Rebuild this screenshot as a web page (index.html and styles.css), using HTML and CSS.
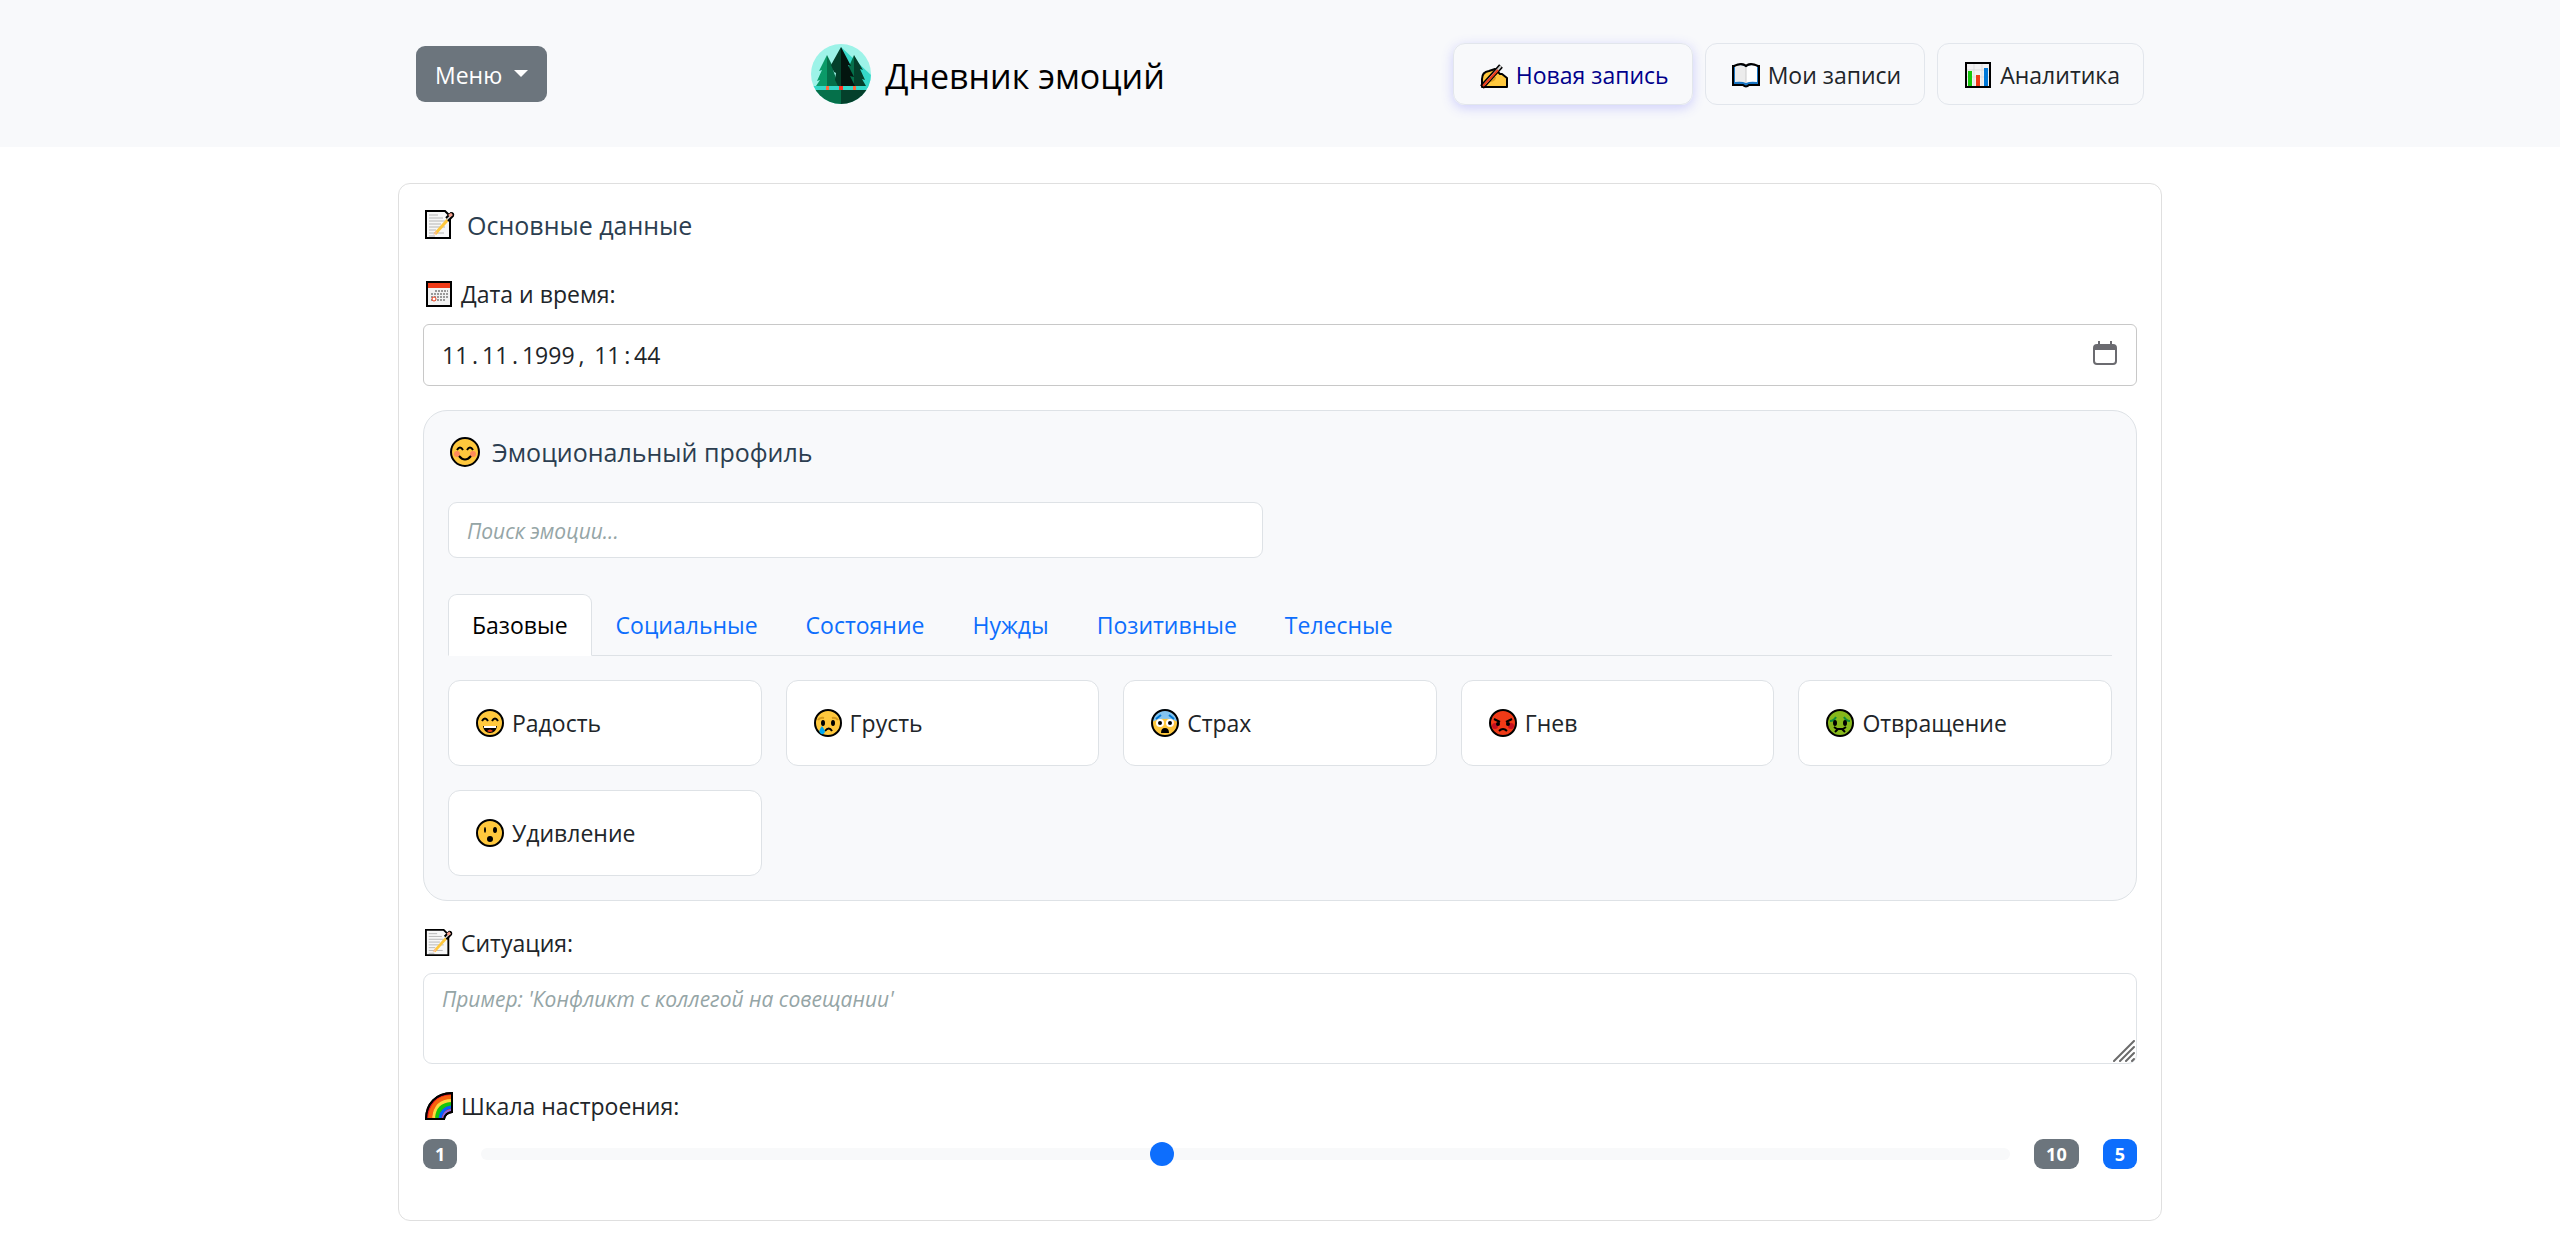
FILE: index.html
```html
<!DOCTYPE html>
<html lang="ru">
<head>
    <meta charset="UTF-8">
    <meta name="viewport" content="width=device-width, initial-scale=1.0">
    <title>Дневник эмоций</title>
    <link rel="stylesheet" href="styles.css">
</head>
<body>
    <!-- Набор иконок -->
    <svg class="sprite" aria-hidden="true">
        <symbol id="i-memo" viewBox="0 0 30 30">
            <path d="M1 1h19l5 5v22H1z" fill="#f7f7f7" stroke="#000" stroke-width="2"/>
            <path d="M4 5h9M4 8h14M4 11h16M4 14h12M4 17h16M4 20h7M4 23h15M4 26h6" stroke="#b5b5b5" stroke-width="1"/>
            <path d="M27 5L10 24" stroke="#ffc83d" stroke-width="3"/>
            <path d="M21 8l5-5q3 0 2 3l-5 5" fill="#ccc" stroke="#000" stroke-width="2"/>
            <path d="M24 6l3-2" stroke="#f5a08c" stroke-width="3"/>
            <path d="M11 21l-3 4 4-2z" fill="#f7b6a0"/>
        </symbol>
        <symbol id="i-calendar" viewBox="0 0 28 28">
            <path d="M2 2h24v24H2z" fill="#f2f2f2" stroke="#000" stroke-width="2"/>
            <path d="M3 3h22v5H3z" fill="#f03a17"/>
            <path d="M10 11h13M6 14h17M6 17h17M6 20h15" stroke="#999" stroke-width="2" stroke-dasharray="2 1"/>
            <circle cx="9" cy="19" r="2" fill="#fff" stroke="#f03a17"/>
        </symbol>
        <symbol id="i-write" viewBox="0 0 28 28">
            <path d="M2 26V18Q2 11 9 10l6-2 5 5h2l5 4v9z" fill="#ffc83d" stroke="#000" stroke-width="2" stroke-linejoin="round"/>
            <path d="M9 20q6 0 6-4" fill="none" stroke="#e0a020" stroke-width="2"/>
            <path d="M2 26L21 5" stroke="#000" stroke-width="5"/>
            <path d="M4 24L21 5" stroke="#ccc" stroke-width="2"/>
            <path d="M3 25L18 9" stroke="#f03a17" stroke-width="2"/>
        </symbol>
        <symbol id="i-book" viewBox="0 0 28 28">
            <path d="M1 5h3q6-3 10 0q4-3 10 0h3v19H17q-3 3-6 0H1z" fill="#1976c5" stroke="#000" stroke-width="2"/>
            <path d="M3 5q7-2 11 1v16q-4-2-11-1z" fill="#ececec"/>
            <path d="M25 5q-7-2-11 1v16q4-2 11-1z" fill="#fff"/>
            <path d="M2 5q8-4 12 0q4-4 12 0" fill="none" stroke="#000" stroke-width="2"/>
            <path d="M14 6v16" stroke="#ccc"/>
        </symbol>
        <symbol id="i-chart" viewBox="0 0 28 28">
            <path d="M2 2h24v24H2z" fill="#f2f2f2" stroke="#000" stroke-width="2"/>
            <path d="M3 9h22M3 16h22M10 3v22M18 3v22" stroke="#ddd"/>
            <path d="M4 10h4v15H4z" fill="#16c60c"/>
            <path d="M12 14h4v11h-4z" fill="#f03a17"/>
            <path d="M20 7h4v18h-4z" fill="#0078d7"/>
        </symbol>
        <symbol id="i-rainbow" viewBox="0 0 28 28">
            <path d="M1 27C1 12 11 1 27 1v19q-7 1-8 7z" fill="#e81224" stroke="#000" stroke-width="2"/>
            <path d="M5 26C6 14 13 5 26 5" fill="none" stroke="#f7630c" stroke-width="4"/>
            <path d="M9 26Q11 9 26 9" fill="none" stroke="#ffd83d" stroke-width="4"/>
            <path d="M12 26Q13 13 26 12" fill="none" stroke="#16c60c" stroke-width="4"/>
            <path d="M15 26Q17 16 26 15" fill="none" stroke="#0063ff" stroke-width="3"/>
            <path d="M18 26Q19 19 26 18" fill="none" stroke="#886ce4" stroke-width="2"/>
            <path d="M1 27C1 12 11 1 27 1v19q-7 1-8 7z" fill="none" stroke="#000" stroke-width="2"/>
        </symbol>
        <symbol id="i-smile" viewBox="0 0 30 30">
            <circle cx="15" cy="15" r="14" fill="#ffc83d" stroke="#000" stroke-width="2"/>
            <circle cx="7" cy="17" r="3" fill="#ff8b5a"/>
            <circle cx="23" cy="17" r="3" fill="#ff8b5a"/>
            <path d="M7 13q3-5 6 0M17 13q3-5 6 0M9 19q6 7 12 0" fill="none" stroke="#000" stroke-width="2"/>
        </symbol>
        <symbol id="i-joy" viewBox="0 0 28 28">
            <circle cx="14" cy="14" r="13" fill="#ffc83d" stroke="#000" stroke-width="2"/>
            <path d="M6 12q3-5 6 0M16 12q3-5 6 0" fill="none" stroke="#000" stroke-width="2"/>
            <path d="M7 17h14q-1 7-7 7t-7-7z" fill="#000"/>
            <path d="M8 17h12v2H8z" fill="#fff"/>
            <path d="M11 22q3-3 6 0q-3 2-6 0z" fill="#f03a17"/>
        </symbol>
        <symbol id="i-sad" viewBox="0 0 28 28">
            <circle cx="14" cy="14" r="13" fill="#ffc83d" stroke="#000" stroke-width="2"/>
            <path d="M4 11q2-3 6-2M18 9q4-1 6 2" fill="none" stroke="#d69a1c" stroke-width="2"/>
            <ellipse cx="9" cy="14" rx="2" ry="3" fill="#000"/>
            <ellipse cx="19" cy="14" rx="2" ry="3" fill="#000"/>
            <path d="M11 22q4-5 7 0" fill="none" stroke="#000" stroke-width="2"/>
            <path d="M8 17q-4 5-2 7q3 3 5-1q0-2-3-6z" fill="#00a8f0"/>
        </symbol>
        <symbol id="i-fear" viewBox="0 0 28 28">
            <circle cx="14" cy="14" r="13" fill="#ffc83d"/>
            <path d="M1 13a13 13 0 0 1 26 0q-7-4-13-3q-6-1-13 3z" fill="#83c4f0"/>
            <path d="M5 10l5-4M18 6l5 4" stroke="#0078d7" stroke-width="2"/>
            <circle cx="9" cy="14" r="4" fill="#fff"/>
            <circle cx="19" cy="14" r="4" fill="#fff"/>
            <circle cx="9" cy="14" r="2"/>
            <circle cx="19" cy="14" r="2"/>
            <path d="M10 24q0-5 4-5t4 5z"/>
            <circle cx="14" cy="14" r="13" fill="none" stroke="#000" stroke-width="2"/>
        </symbol>
        <symbol id="i-anger" viewBox="0 0 28 28">
            <circle cx="14" cy="14" r="13" fill="#f03a17" stroke="#000" stroke-width="2"/>
            <circle cx="6" cy="17" r="3" fill="#c50f1f"/>
            <circle cx="22" cy="17" r="3" fill="#c50f1f"/>
            <path d="M5 10l6 3M23 10l-6 3M10 22q4-4 8 0" fill="none" stroke="#000" stroke-width="2"/>
            <circle cx="9" cy="15" r="2"/>
            <circle cx="19" cy="15" r="2"/>
        </symbol>
        <symbol id="i-disgust" viewBox="0 0 28 28">
            <circle cx="14" cy="14" r="13" fill="#86b81b" stroke="#000" stroke-width="2"/>
            <path d="M4 12q4 0 6-4M24 12q-4 0-6-4" fill="none" stroke="#0e8a3a" stroke-width="2"/>
            <ellipse cx="9" cy="14" rx="2" ry="3"/>
            <ellipse cx="19" cy="14" rx="2" ry="3"/>
            <path d="M8 18l3 2h6l3-2M9 23l3-3M19 23l-3-3" fill="none" stroke="#000" stroke-width="2"/>
        </symbol>
        <symbol id="i-surprise" viewBox="0 0 28 28">
            <circle cx="14" cy="14" r="13" fill="#ffc83d" stroke="#000" stroke-width="2"/>
            <ellipse cx="9" cy="11" rx="1" ry="3"/>
            <ellipse cx="19" cy="11" rx="2" ry="3"/>
            <ellipse cx="14" cy="20" rx="3" ry="3"/>
        </symbol>
    </svg>

    <header class="header">
        <div class="header-inner">
            <button type="button" class="menu-button">Меню</button>

            <div class="brand">
                <svg class="brand-logo" viewBox="0 0 60 60" aria-hidden="true">
                    <clipPath id="round"><circle cx="30" cy="30" r="30"/></clipPath>
                    <g clip-path="url(#round)">
                        <path d="M0 0h60v60H0z" fill="#9df3e8"/>
                        <path d="M30 3l30 28v13H30z" fill="#35d8c8"/>
                        <path d="M16 11L8 27l3-1-5 11 3-1-4 6h11z" fill="#0a9a68"/>
                        <path d="M16 11l8 16-2-1 6 16H16z" fill="#05704a"/>
                        <path d="M43 11l-7 16v15h8z" fill="#05704a"/>
                        <path d="M43 11l9 15-3-1 5 11-3-1 4 7H43z" fill="#04402b"/>
                        <path d="M30 3L20 21l3 7 2 1-1 7 3 6h3z" fill="#04402b"/>
                        <path d="M30 3l10 19-3-1 6 12-4-1 5 10H30z" fill="#03150f"/>
                        <path d="M0 42h60v4H0z" fill="#35d8c8"/>
                        <path d="M15 42h3v4h-3zM42 42h3v4h-3z" fill="#ff6b3d"/>
                        <path d="M28 42h4v4h-4z" fill="#ff3020"/>
                        <path d="M0 46h30v14H0z" fill="#05704a"/>
                        <path d="M30 46h30v14H30z" fill="#04402b"/>
                    </g>
                </svg>
                <span class="brand-name">Дневник эмоций</span>
            </div>

            <nav class="nav">
                <a href="#new" class="nav-item active"><svg class="icon"><use href="#i-write"/></svg>Новая запись</a>
                <a href="#entries" class="nav-item"><svg class="icon"><use href="#i-book"/></svg>Мои записи</a>
                <a href="#stats" class="nav-item"><svg class="icon"><use href="#i-chart"/></svg>Аналитика</a>
            </nav>
        </div>
    </header>

    <main class="container">
        <form class="card">
            <h2 class="section-title"><svg class="icon-lg"><use href="#i-memo"/></svg>Основные данные</h2>

            <!-- Дата и время -->
            <div class="field">
                <label for="date"><svg class="icon"><use href="#i-calendar"/></svg>Дата и время:</label>
                <div class="date-box">
                    <input type="text" id="date" name="date" class="control control-date" value="11&thinsp;.&thinsp;11&thinsp;.&thinsp;1999&thinsp;,&thinsp; 11&thinsp;:&thinsp;44">
                    <button type="button" class="date-button" aria-label="Открыть календарь">
                        <svg viewBox="0 0 24 24" width="24" height="24">
                            <path d="M5 0h2v4H5zM17 0h2v4h-2z" fill="#6b6b70"/>
                            <rect x="1" y="4" width="22" height="19" rx="3" fill="none" stroke="#6b6b70" stroke-width="2"/>
                            <path d="M1 4h22v5H1z" fill="#6b6b70"/>
                        </svg>
                    </button>
                </div>
            </div>

            <!-- Эмоции -->
            <section class="profile">
                <h2 class="section-title"><svg class="icon-lg"><use href="#i-smile"/></svg>Эмоциональный профиль</h2>
                <input type="text" class="control search" placeholder="Поиск эмоции..." aria-label="Поиск эмоции">

                <div class="tabs" role="tablist">
                    <button type="button" class="tab active" role="tab">Базовые</button>
                    <button type="button" class="tab" role="tab">Социальные</button>
                    <button type="button" class="tab" role="tab">Состояние</button>
                    <button type="button" class="tab" role="tab">Нужды</button>
                    <button type="button" class="tab" role="tab">Позитивные</button>
                    <button type="button" class="tab" role="tab">Телесные</button>
                </div>

                <div class="emotions">
                    <button type="button" class="emotion"><svg class="icon"><use href="#i-joy"/></svg>Радость</button>
                    <button type="button" class="emotion"><svg class="icon"><use href="#i-sad"/></svg>Грусть</button>
                    <button type="button" class="emotion"><svg class="icon"><use href="#i-fear"/></svg>Страх</button>
                    <button type="button" class="emotion"><svg class="icon"><use href="#i-anger"/></svg>Гнев</button>
                    <button type="button" class="emotion"><svg class="icon"><use href="#i-disgust"/></svg>Отвращение</button>
                    <button type="button" class="emotion"><svg class="icon"><use href="#i-surprise"/></svg>Удивление</button>
                </div>
            </section>

            <!-- Ситуация -->
            <div class="field">
                <label for="situation"><svg class="icon"><use href="#i-memo"/></svg>Ситуация:</label>
                <div class="textarea-box">
                    <textarea id="situation" name="situation" class="control" placeholder="Пример: 'Конфликт с коллегой на совещании'"></textarea>
                    <svg class="grip" viewBox="0 0 22 22" aria-hidden="true">
                        <path d="M1 21L21 1M7 21L21 7M13 21l8-8M19 21l2-2" stroke="#6b6b6b" stroke-width="2" stroke-linecap="round"/>
                    </svg>
                </div>
            </div>

            <!-- Настроение -->
            <div class="field">
                <label for="mood"><svg class="icon"><use href="#i-rainbow"/></svg>Шкала настроения:</label>
                <div class="scale">
                    <span class="badge">1</span>
                    <input type="range" id="mood" name="mood" min="1" max="10" value="5">
                    <span class="badge">10</span>
                    <span class="badge badge-primary">5</span>
                </div>
            </div>
        </form>
    </main>
</body>
</html>
```
FILE: styles.css
```css
* {
    box-sizing: border-box;
    margin: 0;
    padding: 0;
}
body {
    background-color: #fff;
    color: #212529;
    font-family: 'Open Sans', 'Noto Sans', sans-serif;
    font-size: 23px;
    line-height: 36px;
}
button,
input,
textarea {
    font: inherit;
    color: inherit;
}
button {
    cursor: pointer;
}
.sprite {
    display: none;
}
.icon {
    flex: none;
    width: 28px;
    height: 28px;
}
.icon-lg {
    flex: none;
    width: 30px;
    height: 30px;
}

/* Шапка */
.header {
    background-color: #f8f9fb;
    padding: 43px 18px 42px;
}
.header-inner {
    display: flex;
    justify-content: space-between;
    align-items: center;
    max-width: 1764px;
    margin: 0 auto;
    padding: 0 18px;
}
.menu-button {
    display: flex;
    align-items: center;
    gap: 12px;
    height: 56px;
    padding: 2px 19px 0;
    border: none;
    border-radius: 9px;
    background-color: #6c757d;
    color: #fff;
}
.menu-button::after {
    content: "";
    border-top: 7px solid #fff;
    border-left: 7px solid transparent;
    border-right: 7px solid transparent;
    margin-bottom: 4px;
}
.brand {
    display: flex;
    align-items: center;
    gap: 14px;
    margin-right: 24px;
}
.brand-logo {
    width: 60px;
    height: 60px;
}
.brand-name {
    padding-top: 3px;
    color: #000;
    font-size: 34px;
}
.nav {
    display: flex;
    gap: 12px;
}
.nav-item {
    display: flex;
    align-items: center;
    gap: 8px;
    padding: 13px 23px 11px 26px;
    border: 1px solid #e2e6ec;
    border-radius: 12px;
    color: #212529;
    text-decoration: none;
}
.nav-item.active {
    color: #00008b;
    box-shadow: 0 3px 12px rgba(80, 80, 255, 0.25);
}

/* Форма */
.container {
    max-width: 1800px;
    margin: 36px auto 0;
    padding: 0 18px;
}
.card {
    padding: 24px;
    border: 1px solid #dfdfdf;
    border-radius: 12px;
}
.section-title {
    display: flex;
    align-items: center;
    gap: 12px;
    margin-bottom: 34px;
    padding-left: 2px;
    color: #2c3e50;
    font-size: 25px;
    font-weight: 400;
    line-height: 34px;
}
.field {
    margin-bottom: 24px;
}
.field label {
    display: flex;
    align-items: center;
    gap: 8px;
    margin-bottom: 12px;
    padding-left: 2px;
}
.control {
    display: block;
    width: 100%;
    padding: 9px 18px;
    border: 1px solid #dee2e6;
    border-radius: 9px;
    background-color: #fff;
    outline: none;
}
.control::placeholder {
    color: #95a5a6;
    font-size: 21px;
    font-style: italic;
}
.date-box,
.textarea-box {
    position: relative;
}
.control-date {
    height: 62px;
    border-color: #c8c8c8;
    border-radius: 6px;
}
.date-button {
    position: absolute;
    top: 17px;
    right: 20px;
    width: 24px;
    height: 24px;
    border: none;
    background: none;
}
.date-button svg {
    display: block;
}
textarea.control {
    height: 91px;
    padding-top: 7px;
    resize: none;
}
.grip {
    position: absolute;
    right: 2px;
    bottom: 2px;
    width: 22px;
    height: 22px;
}

/* Эмоциональный профиль */
.profile {
    margin-bottom: 24px;
    padding: 24px;
    border: 1px solid #dee2e6;
    border-radius: 24px;
    background-color: #f8f9fb;
}
.profile .section-title {
    margin-bottom: 33px;
}
.search {
    width: 49%;
    height: 56px;
    margin-bottom: 36px;
}
.tabs {
    display: flex;
    margin-bottom: 24px;
    box-shadow: inset 0 -1px #dee2e6;
}
.tab {
    padding: 12px 23px;
    border: 1px solid transparent;
    border-radius: 9px 9px 0 0;
    background: none;
    color: #0d6efd;
}
.tab.active {
    border-color: #dee2e6;
    border-bottom-color: #fff;
    background-color: #fff;
    color: #000;
}
.emotions {
    display: grid;
    grid-template-columns: repeat(5, 1fr);
    gap: 24px;
}
.emotion {
    display: flex;
    align-items: center;
    gap: 8px;
    padding: 24px 27px;
    border: 1px solid #dee2e6;
    border-radius: 12px;
    background-color: #fff;
}

/* Шкала */
.scale {
    display: flex;
    align-items: center;
    gap: 24px;
}
.scale input {
    flex: 1;
    height: 36px;
    background: none;
    appearance: none;
}
.scale input::-webkit-slider-runnable-track {
    height: 12px;
    border-radius: 6px;
    background-color: #f8f9fa;
}
.scale input::-webkit-slider-thumb {
    width: 24px;
    height: 24px;
    margin-top: -6px;
    border-radius: 50%;
    background-color: #0d6efd;
    appearance: none;
}
.badge {
    padding: 6px 12px;
    border-radius: 9px;
    background-color: #6c757d;
    color: #fff;
    font-size: 18px;
    font-weight: 700;
    line-height: 18px;
}
.badge-primary {
    background-color: #0d6efd;
}
```
